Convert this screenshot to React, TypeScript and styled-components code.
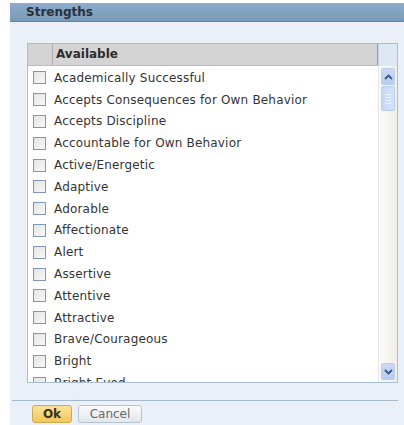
import React from 'react';
import styled, { createGlobalStyle } from 'styled-components';

const GlobalStyle = createGlobalStyle`
  html, body {
    margin: 0;
    padding: 0;
    background: #ffffff;
  }
  body {
    padding: 3px 0 0 10px;
    font-family: "DejaVu Sans", Verdana, sans-serif;
    overflow: hidden;
  }
`;

const Dialog = styled.div`
  width: 394px;
  height: 422px;
  background: #ebf0f8;
  display: flex;
  flex-direction: column;
`;

const TitleBar = styled.div`
  height: 18px;
  background: linear-gradient(#8eaccb, #7a98b8);
  border-bottom: 1px solid #6682a1;
  color: #27313c;
  font-size: 12px;
  font-weight: bold;
  line-height: 19px;
  padding-left: 16px;
`;

const Body = styled.div`
  padding: 21px 6px 0 17px;
`;

const ListBox = styled.div`
  height: 338px;
  border: 1px solid #a9bdd6;
  background: #ffffff;
  display: grid;
  grid-template-columns: 1fr 19px;
  grid-template-rows: 22px 1fr;
  overflow: hidden;
`;

const HeadRow = styled.div`
  display: flex;
  background: #d4d4d4;
  border-bottom: 1px solid #bcbcbc;
`;

const HeadCell = styled.div<{ $w?: number }>`
  ${({ $w }) => ($w ? `width: ${$w}px;` : 'flex: 1;')}
  border-right: 1px solid ${({ $w }) => ($w ? '#b0b0b0' : '#9c9c9c')};
  color: #2e2e2e;
  font-size: 12px;
  font-weight: bold;
  line-height: 21px;
  padding-left: 3px;
`;

const ScrollHead = styled.div`
  background: #dde8f5;
  border-left: 1px solid #c4d3e6;
`;

const Rows = styled.div`
  overflow: hidden;
  padding-top: 1px;
`;

const Row = styled.label`
  display: flex;
  align-items: center;
  height: 21.8px;
  padding-left: 5px;
  gap: 8px;
  color: #333333;
  font-size: 12px;
  letter-spacing: 0.18px;
  white-space: nowrap;
`;

const Box = styled.span`
  width: 11px;
  height: 11px;
  flex: none;
  border: 1px solid #7d97b8;
  background: linear-gradient(135deg, #e4e4e4, #f8f8f8);
`;

const ScrollBar = styled.div`
  display: flex;
  flex-direction: column;
  padding: 2px;
  background: linear-gradient(to right, #fbfbfa, #f1eee6);
  border-left: 1px solid #e6e6e6;
`;

const ScrollBtn = styled.div`
  height: 15px;
  flex: none;
  background: linear-gradient(#cad9f5, #b9cdf1);
  border: 1px solid #bccdea;
  border-radius: 2px;
  display: flex;
  align-items: center;
  justify-content: center;
`;

const Thumb = styled.div`
  height: 23px;
  flex: none;
  margin-top: 1px;
  background: linear-gradient(to right, #c7d7f6, #d6e2f8);
  border: 1px solid #bccdea;
  border-radius: 2px;
  display: flex;
  flex-direction: column;
  justify-content: center;
  align-items: center;
  gap: 2px;
`;

const Grip = styled.span`
  width: 6px;
  height: 1px;
  background: #eef3fc;
`;

const Track = styled.div`
  flex: 1;
`;

const Footer = styled.div`
  margin: 17px 6px 0 2px;
  border-top: 1px solid #a4b8cf;
  padding: 4px 0 0 20px;
  display: flex;
  gap: 6px;
`;

const Button = styled.button<{ $primary?: boolean }>`
  height: 18px;
  padding: 0 7px;
  font-family: "DejaVu Sans", Verdana, sans-serif;
  font-size: 12px;
  font-weight: ${({ $primary }) => ($primary ? 'bold' : 'normal')};
  color: ${({ $primary }) => ($primary ? '#3a3222' : '#63686f')};
  border-radius: 3px;
  border: 1px solid ${({ $primary }) => ($primary ? '#d3a94e' : '#b7c3d1')};
  background: ${({ $primary }) =>
    $primary
      ? 'linear-gradient(#fbe39a, #f2c65a)'
      : 'linear-gradient(#fafbfc, #e3e7ec)'};
  min-width: ${({ $primary }) => ($primary ? '40px' : '64px')};
  line-height: 16px;
`;

const Chevron = ({ up }: { up?: boolean }) => (
  <svg width="9" height="6" viewBox="0 0 9 6">
    <path
      d={up ? 'M1 5 L4.5 1.5 L8 5' : 'M1 1 L4.5 4.5 L8 1'}
      fill="none"
      stroke="#3c5680"
      strokeWidth="1.8"
    />
  </svg>
);

const strengths = [
  'Academically Successful',
  'Accepts Consequences for Own Behavior',
  'Accepts Discipline',
  'Accountable for Own Behavior',
  'Active/Energetic',
  'Adaptive',
  'Adorable',
  'Affectionate',
  'Alert',
  'Assertive',
  'Attentive',
  'Attractive',
  'Brave/Courageous',
  'Bright',
  'Bright Eyed',
];

export default function App() {
  return (
    <>
      <GlobalStyle />
      <Dialog>
        <TitleBar>Strengths</TitleBar>
        <Body>
          <ListBox>
            <HeadRow>
              <HeadCell $w={21} />
              <HeadCell>Available</HeadCell>
            </HeadRow>
            <ScrollHead />
            <Rows>
              {strengths.map((s) => (
                <Row key={s}>
                  <Box />
                  {s}
                </Row>
              ))}
            </Rows>
            <ScrollBar>
              <ScrollBtn>
                <Chevron up />
              </ScrollBtn>
              <Thumb>
                <Grip />
                <Grip />
                <Grip />
                <Grip />
              </Thumb>
              <Track />
              <ScrollBtn>
                <Chevron />
              </ScrollBtn>
            </ScrollBar>
          </ListBox>
        </Body>
        <Footer>
          <Button $primary>Ok</Button>
          <Button>Cancel</Button>
        </Footer>
      </Dialog>
    </>
  );
}
